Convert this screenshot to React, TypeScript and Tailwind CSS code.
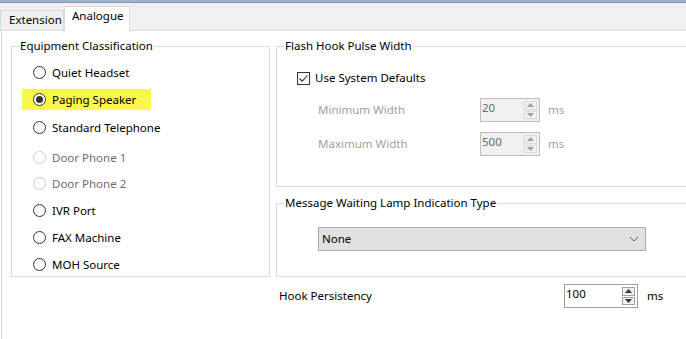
import React from 'react';

const radios = [
  { label: 'Quiet Headset', mt: 'mt-[8px]', checked: false, disabled: false },
  { label: 'Paging Speaker', mt: 'mt-[6px]', checked: true, disabled: false },
  { label: 'Standard Telephone', mt: 'mt-[7px]', checked: false, disabled: false },
  { label: 'Door Phone 1', mt: 'mt-[9px]', checked: false, disabled: true },
  { label: 'Door Phone 2', mt: 'mt-[5px]', checked: false, disabled: true },
  { label: 'IVR Port', mt: 'mt-[6px]', checked: false, disabled: false },
  { label: 'FAX Machine', mt: 'mt-[6px]', checked: false, disabled: false },
  { label: 'MOH Source', mt: 'mt-[6px]', checked: false, disabled: false },
];

const Radio = ({ checked, disabled }: { checked: boolean; disabled: boolean }) => (
  <span
    className={`w-[13px] h-[13px] rounded-full border flex items-center justify-center shrink-0 bg-white ${disabled ? 'border-[#c8c8c8]' : 'border-[#333333]'}`}
  >
    {checked && <span className="w-[7px] h-[7px] rounded-full bg-[#333333]" />}
  </span>
);

const SpinBox = ({ value, disabled, width }: { value: string; disabled?: boolean; width: string }) => (
  <div
    className={`${width} h-[24px] border flex items-stretch ${disabled ? 'border-[#bfbfbf] bg-[#f0f0f0] text-[#6d6d6d]' : 'border-[#a0a0a0] bg-white text-black'}`}
  >
    <span className="flex-1 pl-[1px] leading-[18px]">{value}</span>
    <div className="w-[13px] flex flex-col gap-px py-[2px] mr-[2px]">
      {[0, 1].map(i => (
        <div
          key={i}
          className={`flex-1 border flex items-center justify-center ${disabled ? 'border-[#dadada] bg-[#f0f0f0]' : 'border-[#a0a0a0] bg-[#f0f0f0]'}`}
        >
          <svg width="7" height="4" viewBox="0 0 7 4">
            <path d={i === 0 ? 'M0 4 L3.5 0 L7 4 Z' : 'M0 0 L3.5 4 L7 0 Z'} fill={disabled ? '#a0a0a0' : '#333333'} />
          </svg>
        </div>
      ))}
    </div>
  </div>
);

export default function App() {
  return (
    <div className="w-[686px] h-[339px] overflow-hidden bg-white text-[11.5px] leading-[16px] text-black font-['Noto_Sans',sans-serif]">
      {/* window frame */}
      <div className="h-[2px] bg-[#99b4d1]" />
      <div className="h-px bg-[#8a96a3]" />

      {/* Tabs */}
      <div className="h-[28px] bg-[#f0f0f0] border-b border-[#d9d9d9] flex items-end">
        <div className="h-[20px] w-[64px] border border-b-0 border-[#d9d9d9] bg-[#f0f0f0] pl-[8px] leading-[18px]">
          Extension
        </div>
        <div className="h-[25px] w-[66px] -mb-px border border-b-0 border-[#d9d9d9] bg-white pl-[7px] leading-[18px]">
          Analogue
        </div>
      </div>

      {/* Tab content */}
      <div className="ml-px border-l border-[#d9d9d9] h-[308px] flex gap-[6px] pl-[9px] pt-[7px]">
        {/* Equipment Classification */}
        <fieldset className="w-[259px] h-[239px] border border-[#dcdcdc] shrink-0">
          <legend className="ml-[7px] px-[1px]">Equipment Classification</legend>
          <div className="pl-[10px] flex flex-col items-start">
            {radios.map(r => (
              <div
                key={r.label}
                className={`${r.mt} h-[21px] flex items-center gap-[6px] pl-[11px] ${r.checked ? 'bg-[#fbf64c] w-[129px]' : ''} ${r.disabled ? 'text-[#6d6d6d]' : 'text-black'}`}
              >
                <Radio checked={r.checked} disabled={r.disabled} />
                <span>{r.label}</span>
              </div>
            ))}
          </div>
        </fieldset>

        {/* Right column */}
        <div className="flex flex-col w-[430px] shrink-0">
          <fieldset className="h-[149px] border border-[#dcdcdc]">
            <legend className="ml-[7px] px-[1px]">Flash Hook Pulse Width</legend>
            <div className="pl-[20px] mt-[16px] flex items-center gap-[5px]">
              <span className="w-[13px] h-[13px] border border-[#333333] bg-white flex items-center justify-center">
                <svg width="11" height="11" viewBox="0 0 11 11">
                  <path d="M1.5 5.5 L4.2 8.2 L9.5 2.5" fill="none" stroke="#333333" strokeWidth="1.1" />
                </svg>
              </span>
              <span>Use System Defaults</span>
            </div>
            <div className="pl-[41px] mt-[12px] flex items-center text-[#a0a0a0]">
              <span className="w-[162px]">Minimum Width</span>
              <SpinBox value="20" disabled width="w-[60px]" />
              <span className="ml-[8px]">ms</span>
            </div>
            <div className="pl-[41px] mt-[10px] flex items-center text-[#a0a0a0]">
              <span className="w-[162px]">Maximum Width</span>
              <SpinBox value="500" disabled width="w-[60px]" />
              <span className="ml-[8px]">ms</span>
            </div>
          </fieldset>

          <fieldset className="mt-[8px] h-[82px] border border-[#dcdcdc]">
            <legend className="ml-[7px] px-[1px]">Message Waiting Lamp Indication Type</legend>
            <div className="ml-[41px] mt-[16px] w-[328px] h-[24px] bg-[#e1e1e1] border border-[#adadad] flex items-center justify-between pl-[3px] pr-[6px]">
              <span>None</span>
              <svg width="10" height="6" viewBox="0 0 10 6">
                <path d="M1 1 L5 5 L9 1" fill="none" stroke="#606060" strokeWidth="1" />
              </svg>
            </div>
          </fieldset>

          <div className="mt-[7px] h-[24px] flex items-center pl-[3px]">
            <span className="w-[285px]">Hook Persistency</span>
            <SpinBox value="100" width="w-[74px]" />
            <span className="ml-[9px]">ms</span>
          </div>
        </div>
      </div>
    </div>
  );
}
